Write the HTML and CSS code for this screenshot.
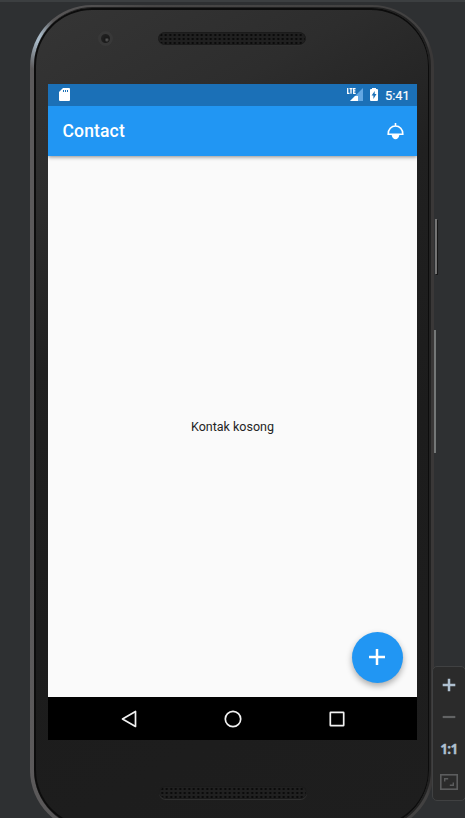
FILE: index.html
```html
<!DOCTYPE html>
<html lang="id">
<head>
<meta charset="utf-8">
<title>Contact</title>
<link rel="stylesheet" href="styles.css">
</head>
<body>
<div class="stage">
  <div class="phone">
    <div class="bezel">
      <header class="forehead">
        <span class="camera"></span>
        <span class="grille"></span>
      </header>
      <main class="screen">
        <div class="status">
          <svg class="sd" width="11" height="13" viewBox="0 0 11 13"><path fill="#fff" fill-rule="evenodd" d="M4 0h6q1 0 1 1v11q0 1-1 1H1q-1 0-1-1V4zM4 2v2h1V2zM6 2v2h1V2zM8 2v2h1V2z"/></svg>
          <svg class="signal" width="16" height="13" viewBox="0 0 16 13"><path fill="#63a7e3" d="M16 0v13H3z"/><path fill="#fff" d="M11 6v7H3l5-5h3z"/><path fill="none" stroke="#fff" stroke-width="1.3" d="M.7 0v5.3h1.8M2.500.7h3M4 .7v5.100M8.600.7H6.700v4.600h2M6.700 2.900h1.700"/></svg>
          <svg class="battery" width="8" height="13" viewBox="0 0 8 13"><path fill="#fff" d="M2 0h4v1h1q1 0 1 1v10q0 1-1 1H1q-1 0-1-1V2q0-1 1-1h1z"/><path fill="#1b70b7" d="M4.700 3v3h1.800L3.400 11V7.600H1.600z"/></svg>
          <span class="clock">5:41</span>
        </div>
        <div class="appbar">
          <h1>Contact</h1>
          <svg width="17" height="17" viewBox="0 0 17 17"><path fill="none" stroke="#fff" stroke-width="1.600" d="M8.500 0v3M1.200 11.200C1 6.200 4.500 3 8.500 3s7.500 3.200 7.300 8.200z"/><path fill="#fff" d="M4.500 11.500h8Q11.500 16.200 8.500 16.200T4.500 11.500z"/></svg>
        </div>
        <div class="content">
          <p>Kontak kosong</p>
          <button class="fab" aria-label="Tambah"><svg width="16" height="16" viewBox="0 0 16 16"><path stroke="#fff" stroke-width="2.500" d="M8 0v16M0 8h16"/></svg></button>
        </div>
        <nav class="navbar">
          <svg width="18" height="18" viewBox="0 0 18 18"><path d="M15.500 1.500v15L2.500 9z"/></svg>
          <svg width="18" height="18" viewBox="0 0 18 18"><circle cx="9" cy="9" r="7.700"/></svg>
          <svg width="18" height="18" viewBox="0 0 18 18"><rect x="2.300" y="2.300" width="13.400" height="13.400" rx=".5"/></svg>
        </nav>
      </main>
      <footer class="chin"><span class="grille"></span></footer>
    </div>
  </div>
  <aside class="side">
    <span class="power"></span>
    <span class="volume"></span>
    <div class="tools">
      <svg width="14" height="14" viewBox="0 0 14 14"><path stroke="#afc0d0" stroke-width="2.500" d="M7 .7v12.600M.7 7h12.600"/></svg>
      <svg width="14" height="14" viewBox="0 0 14 14"><path stroke="#626364" stroke-width="2.200" d="M.7 7h12.600"/></svg>
      <span class="ratio">1:1</span>
      <svg width="18" height="16" viewBox="0 0 18 16"><g fill="none" stroke="#5c5d5e"><rect x=".8" y=".8" width="16.400" height="14.400" stroke-width="1.600"/><path stroke-width="1.400" d="M4.700 7.500V4.700h3.500M13.300 8.500v2.800H9.800"/></g></svg>
    </div>
  </aside>
</div>
</body>
</html>
```
FILE: styles.css
```css
* { box-sizing: border-box; }
body {
  margin: 0;
  height: 818px;
  overflow: hidden;
  background: #2e3032;
  font-family: Roboto, sans-serif;
}
.stage {
  display: grid;
  grid-template-columns: 404px 31px;
  height: 818px;
  padding-left: 30px;
  border-top: 2px solid #3c3f41;
  overflow: hidden;
}
.phone {
  height: 827px;
  margin-top: 3px;
  padding: 3px 5px 3px 4px;
  border-radius: 62px;
  background:
    radial-gradient(ellipse 18px 34px at 7px 31px, #a9bac8 0 15%, transparent 100%),
    linear-gradient(90deg, #5c5a5b 0%, #474646 30%, #424141 98.500%, #3a3838 99%);
}
.bezel {
  height: 820px;
  padding: 74px 10px 0 12px;
  border: 2px solid #0c0c0c;
  border-right-width: 1px;
  border-radius: 58px;
  background: linear-gradient(150deg, #353535 0%, #2d2d2d 18%, #202020 35%, #1c1c1c 60%, #1e1e1e 100%);
  box-shadow: 1px 0 0 1px #222;
}
.forehead {
  display: flex;
  height: 74px;
  margin-top: -74px;
  padding: 20px 0 0 50px;
}
.camera {
  width: 15px;
  height: 15px;
  margin: 1px 45px 0 0;
  border: 3px solid #383838;
  border-radius: 50%;
  background: radial-gradient(circle at 65% 65%, #555 0 6%, #1a1a1a 28%, #262626 100%);
}
.grille {
  width: 148px;
  height: 13px;
  border-radius: 7px;
  border: 1px solid #1b1b1b;
  background: radial-gradient(circle, #080808 0 .8px, transparent 1.300px) 0 0 / 4.500px 4px #202020;
  box-shadow: 0 1px 0 #303030;
}
.forehead .grille { margin-top: 2px; }
.screen {
  width: 369px;
  height: 656px;
  display: grid;
  grid-template-rows: 22px 50px 541px 43px;
  background: #fafafa;
}
.status {
  display: flex;
  align-items: center;
  padding: 0 7px 0 11px;
  background: #1b70b7;
  color: #fff;
}
.sd { margin-top: -1px; }
.signal { margin-left: auto; }
.battery { margin: 0 7px; }
.signal, .battery { margin-top: -1px; }
.clock {
  width: 25px;
  font-size: 12.800px;
  font-weight: 400;
  -webkit-text-stroke: .2px #fff;
  line-height: 22px;
  padding-top: 1px;
  white-space: nowrap;
}
.appbar {
  z-index: 1;
  display: flex;
  align-items: center;
  justify-content: space-between;
  padding: 0 13px 0 14.500px;
  background: #2196f3;
  color: #fff;
  clip-path: inset(0 0 -8px);
  box-shadow: 0 1px 4px rgba(0, 0, 0, .45);
}
.appbar h1 {
  margin: 0;
  font-size: 17.500px;
  font-weight: 500;
  line-height: 24px;
  letter-spacing: .15px;
}
.content {
  position: relative;
  display: grid;
  place-items: center;
}
.content p {
  margin: 0;
  font-size: 12.500px;
  line-height: 18px;
  color: #242424;
}
.fab {
  position: absolute;
  right: 14px;
  bottom: 14px;
  display: grid;
  place-items: center;
  width: 51px;
  height: 51px;
  padding: 0 1px 1px 0;
  border: 0;
  border-radius: 50%;
  background: #2196f3;
  box-shadow: 0 3px 6px rgba(0, 0, 0, .32);
}
.navbar {
  display: flex;
  align-items: center;
  justify-content: center;
  gap: 86px;
  background: #000;
}
.navbar svg {
  fill: none;
  stroke: #f2f2f2;
  stroke-width: 1.700;
  stroke-linejoin: round;
}
.chin {
  display: flex;
  justify-content: center;
  padding-top: 46px;
}
.side {
  display: flex;
  flex-direction: column;
}
.power {
  width: 2px;
  height: 55px;
  margin: 217px 0 0 1px;
  background: #747474;
  box-shadow: 1px 1px 0 #171717;
}
.volume {
  width: 2px;
  height: 123px;
  margin-top: 56px;
  background: #747777;
}
.tools {
  display: flex;
  flex-direction: column;
  align-items: center;
  width: 34px;
  height: 135px;
  margin: 213px 0 0 -2px;
  padding-top: 11px;
  border: 1px solid #404142;
  border-radius: 5px;
  background: #2b2b2b;
  z-index: 1;
}
.tools svg + svg { margin-top: 18px; }
.ratio {
  height: 16px;
  margin: 17px 0 17px;
  font: 700 13.500px/16px "Open Sans", sans-serif;
  letter-spacing: -.600px;
  -webkit-text-stroke: .3px #afc0d0;
  color: #afc0d0;
}
```
